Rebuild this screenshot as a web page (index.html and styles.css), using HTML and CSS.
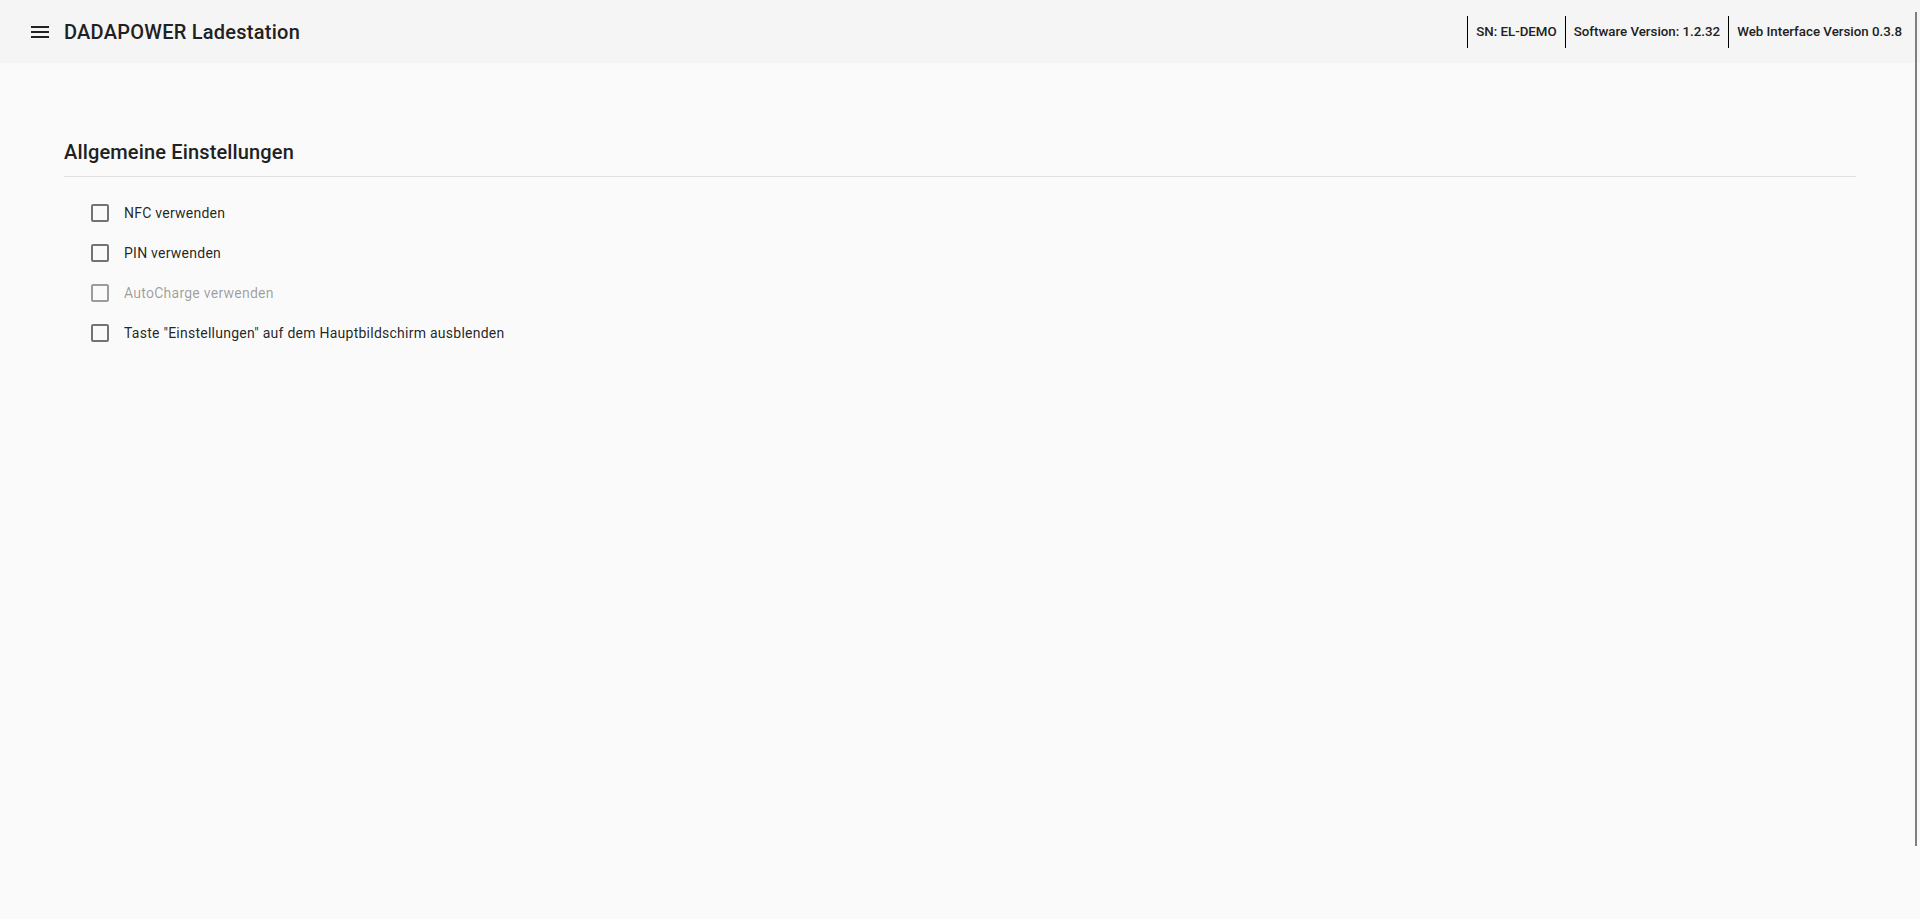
FILE: index.html
```html
<!DOCTYPE html>
<html lang="de">
<head>
<meta charset="utf-8">
<title>DADAPOWER Ladestation</title>
<link rel="stylesheet" href="styles.css">
</head>
<body>
<header class="toolbar">
  <button class="menu-btn" aria-label="Menü">
    <svg viewBox="0 0 24 24" width="24" height="24"><path d="M3 18h18v-2H3v2zm0-5h18v-2H3v2zm0-7v2h18V6H3z" fill="currentColor"/></svg>
  </button>
  <span class="title">DADAPOWER Ladestation</span>
  <span class="spacer"></span>
  <div class="info">
    <span class="info-item">SN: EL-DEMO</span>
    <span class="info-item">Software Version: 1.2.32</span>
    <span class="info-item">Web Interface Version 0.3.8</span>
  </div>
</header>
<main class="content">
  <h2 class="section-title">Allgemeine Einstellungen</h2>
  <div class="options">
    <label class="option"><span class="box-wrap"><span class="box"></span></span><span class="label">NFC verwenden</span></label>
    <label class="option"><span class="box-wrap"><span class="box"></span></span><span class="label">PIN verwenden</span></label>
    <label class="option disabled"><span class="box-wrap"><span class="box"></span></span><span class="label">AutoCharge verwenden</span></label>
    <label class="option"><span class="box-wrap"><span class="box"></span></span><span class="label">Taste "Einstellungen" auf dem Hauptbildschirm ausblenden</span></label>
  </div>
</main>
<div class="edge-bar"></div>
</body>
</html>
```
FILE: styles.css
```css
html, body {
  margin: 0;
  padding: 0;
  height: 100%;
}
body {
  background: #fafafa;
  font-family: Roboto, "Liberation Sans", sans-serif;
  color: rgba(0, 0, 0, 0.87);
  overflow: hidden;
}
.toolbar {
  height: 63px;
  background: #f5f5f5;
  display: flex;
  align-items: center;
  padding: 0 10px 0 16px;
  box-sizing: border-box;
}
.menu-btn {
  width: 48px;
  height: 48px;
  padding: 12px;
  border: none;
  background: transparent;
  color: #212121;
  display: flex;
  align-items: center;
  justify-content: center;
  margin-top: 1px;
}
.menu-btn svg { display: block; }
.title {
  font-size: 20px;
  font-weight: 500;
  letter-spacing: 0.25px;
  color: #212121;
}
.spacer { flex: 1; }
.info {
  display: flex;
  align-items: center;
  margin-top: 1px;
}
.info-item {
  border-left: 1px solid #000;
  height: 32px;
  line-height: 32px;
  padding: 0 8px 0 8px;
  font-size: 13.3px;
  font-weight: 500;
  color: #212121;
}
.content {
  padding: 73px 64px 0 64px;
}
.section-title {
  margin: 0;
  font-size: 20px;
  font-weight: 500;
  line-height: 32px;
  letter-spacing: 0.15px;
  color: #212121;
  padding-bottom: 8px;
  border-bottom: 1px solid #e0e0e0;
}
.options {
  padding: 16px 0 0 16px;
  display: flex;
  flex-direction: column;
}
.option {
  display: flex;
  align-items: center;
  height: 40px;
  cursor: pointer;
}
.box-wrap {
  width: 40px;
  height: 40px;
  display: flex;
  align-items: center;
  justify-content: center;
}
.box {
  width: 18px;
  height: 18px;
  box-sizing: border-box;
  border: 2px solid rgba(0, 0, 0, 0.54);
  border-radius: 2px;
}
.label {
  padding-left: 4px;
  font-size: 14px;
  letter-spacing: 0.25px;
  color: rgba(0, 0, 0, 0.87);
}
.option.disabled .box { border-color: rgba(0, 0, 0, 0.38); }
.option.disabled .label { color: rgba(0, 0, 0, 0.38); }
.edge-bar {
  position: absolute;
  left: 1915px;
  top: 12px;
  width: 2px;
  height: 834px;
  background: #7f7f7f;
}
```
